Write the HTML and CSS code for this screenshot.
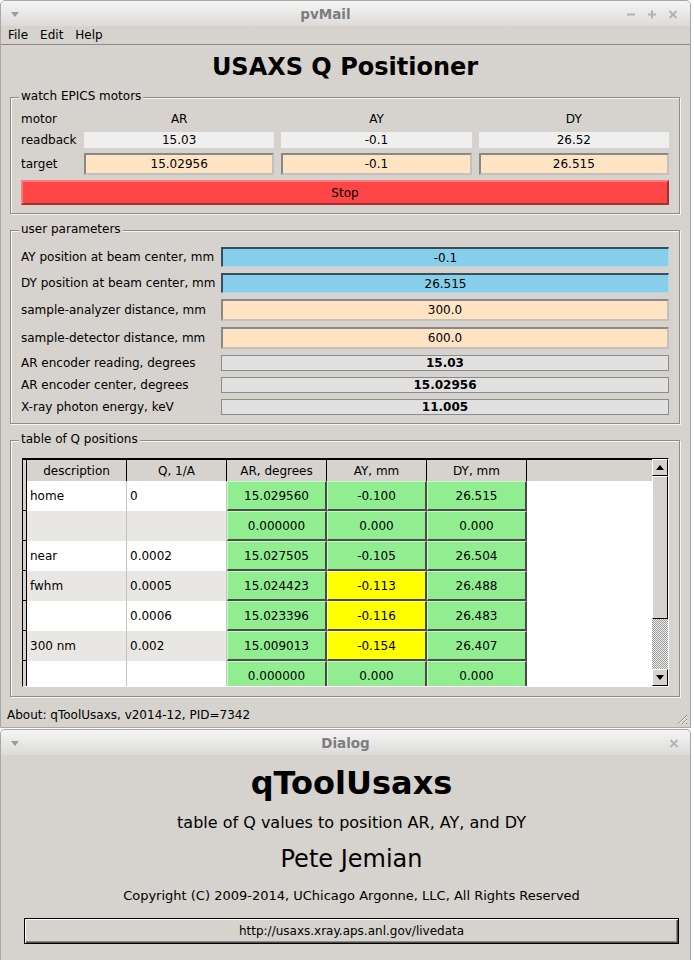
FILE: index.html
```html
<!DOCTYPE html>
<html>
<head>
<meta charset="utf-8">
<title>USAXS Q Positioner</title>
<link rel="stylesheet" href="styles.css">
</head>
<body>
<div class="screen">
  <section class="win main-win">
    <header class="titlebar">
      <span class="tb-left"><span class="tb-arrow"></span></span>
      <span class="tb-title">pvMail</span>
      <span class="tb-btns">
        <svg class="tb-icon" viewBox="0 0 10 10"><path d="M1 5.5H9"/></svg>
        <svg class="tb-icon" viewBox="0 0 10 10"><path d="M1 5.5H9M5 1.5V9.5"/></svg>
        <svg class="tb-icon" viewBox="0 0 10 10"><path d="M1.5 2L8.5 9M8.5 2L1.5 9"/></svg>
      </span>
    </header>
    <nav class="menubar"><span>File</span><span>Edit</span><span>Help</span></nav>
    <main class="content">
      <h1 class="app-title">USAXS Q Positioner</h1>

      <fieldset class="group motors">
        <legend>watch EPICS motors</legend>
        <div class="motor-grid">
          <span class="lbl">motor</span>
          <span class="colhead">AR</span>
          <span class="colhead">AY</span>
          <span class="colhead">DY</span>
          <span class="lbl">readback</span>
          <span class="field readback">15.03</span>
          <span class="field readback">-0.1</span>
          <span class="field readback">26.52</span>
          <span class="lbl">target</span>
          <span class="field target">15.02956</span>
          <span class="field target">-0.1</span>
          <span class="field target">26.515</span>
        </div>
        <button class="stop">Stop</button>
      </fieldset>

      <fieldset class="group params">
        <legend>user parameters</legend>
        <div class="param-grid">
          <span class="lbl">AY position at beam center, mm</span>
          <span class="field blue">-0.1</span>
          <span class="lbl">DY position at beam center, mm</span>
          <span class="field blue">26.515</span>
          <span class="lbl">sample-analyzer distance, mm</span>
          <span class="field target">300.0</span>
          <span class="lbl">sample-detector distance, mm</span>
          <span class="field target">600.0</span>
          <span class="lbl">AR encoder reading, degrees</span>
          <span class="field ro">15.03</span>
          <span class="lbl">AR encoder center, degrees</span>
          <span class="field ro">15.02956</span>
          <span class="lbl">X-ray photon energy, keV</span>
          <span class="field ro">11.005</span>
        </div>
      </fieldset>

      <fieldset class="group qgroup">
        <legend>table of Q positions</legend>
        <div class="qtable">
          <div class="qgrid">
            <div class="qrow head">
              <span class="rh"></span>
              <span class="hc">description</span>
              <span class="hc">Q, 1/A</span>
              <span class="hc">AR, degrees</span>
              <span class="hc">AY, mm</span>
              <span class="hc">DY, mm</span>
              <span class="hc fill"></span>
            </div>
            <div class="qrow">
              <span class="rh"></span>
              <span class="tc">home</span><span class="tc">0</span>
              <span class="gc">15.029560</span><span class="gc">-0.100</span><span class="gc">26.515</span>
              <span class="blank"></span>
            </div>
            <div class="qrow alt">
              <span class="rh"></span>
              <span class="tc"></span><span class="tc"></span>
              <span class="gc">0.000000</span><span class="gc">0.000</span><span class="gc">0.000</span>
              <span class="blank"></span>
            </div>
            <div class="qrow">
              <span class="rh"></span>
              <span class="tc">near</span><span class="tc">0.0002</span>
              <span class="gc">15.027505</span><span class="gc">-0.105</span><span class="gc">26.504</span>
              <span class="blank"></span>
            </div>
            <div class="qrow alt">
              <span class="rh"></span>
              <span class="tc">fwhm</span><span class="tc">0.0005</span>
              <span class="gc">15.024423</span><span class="gc yc">-0.113</span><span class="gc">26.488</span>
              <span class="blank"></span>
            </div>
            <div class="qrow">
              <span class="rh"></span>
              <span class="tc"></span><span class="tc">0.0006</span>
              <span class="gc">15.023396</span><span class="gc yc">-0.116</span><span class="gc">26.483</span>
              <span class="blank"></span>
            </div>
            <div class="qrow alt">
              <span class="rh"></span>
              <span class="tc">300 nm</span><span class="tc">0.002</span>
              <span class="gc">15.009013</span><span class="gc yc">-0.154</span><span class="gc">26.407</span>
              <span class="blank"></span>
            </div>
            <div class="qrow">
              <span class="rh"></span>
              <span class="tc"></span><span class="tc"></span>
              <span class="gc">0.000000</span><span class="gc">0.000</span><span class="gc">0.000</span>
              <span class="blank"></span>
            </div>
          </div>
          <div class="vscroll">
            <span class="sb-btn up"><span class="tri-up"></span></span>
            <span class="sb-thumb"></span>
            <span class="sb-track"></span>
            <span class="sb-btn down"><span class="tri-down"></span></span>
          </div>
        </div>
      </fieldset>
    </main>
    <footer class="statusbar">About: qToolUsaxs, v2014-12, PID=7342</footer>
    <svg class="grip" viewBox="0 0 12 12">
      <path class="grip-dark" d="M11 2L2 11M11 6L6 11M11 10L10 11"/>
      <path class="grip-light" d="M11 3L3 11M11 7L7 11"/>
    </svg>
  </section>

  <section class="win dialog">
    <header class="titlebar">
      <span class="tb-left"><span class="tb-arrow"></span></span>
      <span class="tb-title">Dialog</span>
      <span class="tb-btns single">
        <svg class="tb-icon" viewBox="0 0 10 10"><path d="M1.5 2L8.5 9M8.5 2L1.5 9"/></svg>
      </span>
    </header>
    <div class="dlg-body">
      <div class="dlg-name">qToolUsaxs</div>
      <div class="dlg-desc">table of Q values to position AR, AY, and DY</div>
      <div class="dlg-author">Pete Jemian</div>
      <div class="dlg-copy">Copyright (C) 2009-2014, UChicago Argonne, LLC, All Rights Reserved</div>
      <button class="dlg-url">http://usaxs.xray.aps.anl.gov/livedata</button>
    </div>
  </section>
</div>
</body>
</html>
```

FILE: styles.css
```css
* { box-sizing: border-box; }
html, body { margin: 0; padding: 0; }
body {
  width: 694px;
  height: 960px;
  overflow: hidden;
  background: #ffffff;
  font-family: "DejaVu Sans", "Liberation Sans", sans-serif;
  font-size: 12px;
  color: #000;
}

.screen {
  display: flex;
  flex-direction: column;
  width: 694px;
  height: 960px;
}

/* ---------- windows ---------- */
.win {
  width: 691px;
  background: #d6d2cd;
  border: 1px solid #a9a7a4;
  border-radius: 5px 5px 0 0;
  position: relative;
  display: flex;
  flex-direction: column;
  flex: none;
}
.main-win { height: 728px; }
.dialog { height: 231px; margin-top: 1px; border-bottom: none; }

.titlebar {
  height: 25px;
  flex: none;
  display: flex;
  align-items: center;
  background: linear-gradient(#f5f5f5, #dcdbd9);
  border-radius: 4px 4px 0 0;
}
.tb-left { width: 28px; display: flex; justify-content: center; padding-top: 1px; }
.tb-arrow {
  width: 0; height: 0;
  border-left: 4px solid transparent;
  border-right: 4px solid transparent;
  border-top: 5px solid #9c9c9c;
}
.tb-title {
  flex: 1;
  text-align: center;
  font-weight: bold;
  font-size: 13.5px;
  color: #7d7d7d;
}
.tb-btns {
  width: 68px;
  display: flex;
  align-items: center;
  gap: 11px;
  padding-left: 4px;
}
.tb-btns.single { width: 28px; padding-left: 7px; }
.tb-icon { width: 10px; height: 10px; fill: none; stroke: #b3b3b3; stroke-width: 2; }

.menubar {
  height: 19px;
  flex: none;
  display: flex;
  padding-left: 1px;
  line-height: 18px;
  border-bottom: 1px solid #8c8a86;
}
.menubar span { padding: 0 6px; }

/* ---------- main content ---------- */
.content {
  flex: 1;
  padding: 0 10px 0 9px;
  display: flex;
  flex-direction: column;
}
.app-title {
  margin: 8px 0 0;
  font-size: 24px;
  line-height: 28px;
  font-weight: bold;
  text-align: center;
}

.group {
  margin: 6px 0 0;
  padding: 0 10px 8px;
  border: 1px solid #8f8c88;
  box-shadow: inset 1px 1px 0 #f6f5f3, 1px 1px 0 #f6f5f3;
  min-width: 0;
}
.group legend {
  padding: 2px 2px 4px;
  margin-left: -2px;
  line-height: 14px;
  background: #d6d2cd;
}
.motors { padding-top: 4px; }
.params { padding-top: 7px; }
.qgroup { padding-top: 8px; padding-bottom: 9px; }

.lbl { white-space: nowrap; }

.motor-grid {
  display: grid;
  grid-template-columns: 56px repeat(3, 1fr);
  grid-template-rows: 16px 16px 22px;
  gap: 5px 7px;
  align-items: center;
}
.colhead { text-align: center; }

.field {
  display: flex;
  align-items: center;
  justify-content: center;
  height: 100%;
  white-space: nowrap;
}
.readback { background: #efefef; }
.target {
  background: #ffe4c4;
  border-style: solid;
  border-width: 2px;
  border-color: #8a8886 #c4c0bc #c4c0bc #8a8886;
}
.blue {
  background: #87ceeb;
  border-style: solid;
  border-width: 2px 1px 1px 2px;
  border-color: #35505c #a9d9eb #a9d9eb #35505c;
}
.ro {
  background: #e0e0e0;
  border: 1px solid #8c8c8c;
  font-weight: bold;
}

.stop {
  display: block;
  width: 100%;
  height: 25px;
  margin-top: 5px;
  padding: 0;
  background: #ff4646;
  border: 2px solid;
  border-color: #ff7a7a #a33030 #a33030 #ff7a7a;
  font: inherit;
  color: #000;
}

.param-grid {
  display: grid;
  grid-template-columns: 200px 1fr;
  grid-template-rows: 20px 20px 22px 22px 16px 16px 16px;
  row-gap: 6px;
  align-items: center;
}

/* ---------- Q table ---------- */
.qtable {
  display: flex;
  height: 229px;
  margin: 0 0 0 1px;
  border-style: solid;
  border-width: 1px;
  border-color: #000 #fff #fff #000;
}
.qgrid {
  flex: 1;
  overflow: hidden;
  display: flex;
  flex-direction: column;
  background: #fff;
}
.qrow {
  display: grid;
  grid-template-columns: 4px repeat(5, 100px) 1fr;
  height: 30px;
  flex: none;
}
.qrow.head { height: 22px; }
.hc {
  background: #d6d2cd;
  border-top: 1px solid #000;
  border-right: 1px solid #000;
  display: flex;
  align-items: center;
  justify-content: center;
}
.hc.fill { border-right: none; }
.rh {
  background: #d6d2cd;
  border-right: 1px solid #000;
  border-bottom: 1px solid #000;
}
.head .rh { border-top: 1px solid #000; border-bottom: none; }
.tc {
  display: flex;
  align-items: center;
  padding-left: 3px;
  border-right: 1px solid #c4c4c4;
  background: #fff;
}
.alt .tc { background: #e9e7e3; }
.gc {
  display: flex;
  align-items: center;
  justify-content: center;
  background: #90ee90;
  border-style: solid;
  border-width: 1px 2px 2px 1px;
  border-color: #c8f7c8 #4a4a4a #4a4a4a #c8f7c8;
}
.gc.yc {
  background: #ffff00;
  border-color: #ffffa8 #4a4a4a #4a4a4a #ffffa8;
}
.blank { background: #fff; }

.vscroll {
  width: 16px;
  flex: none;
  display: flex;
  flex-direction: column;
  background: #d6d2cd;
}
.sb-btn {
  height: 17px;
  flex: none;
  display: flex;
  align-items: center;
  justify-content: center;
  background: #d6d2cd;
  border: 1px solid;
  border-color: #fff #000 #000 #fff;
}
.sb-thumb {
  height: 143px;
  flex: none;
  background: #d6d2cd;
  border: 1px solid;
  border-color: #fff #000 #000 #fff;
}
.sb-track {
  flex: 1;
  background: repeating-conic-gradient(#9c9c9c 0 25%, #ededed 0 50%) 0 0 / 2px 2px;
}
.tri-up {
  width: 0; height: 0;
  border-left: 4px solid transparent;
  border-right: 4px solid transparent;
  border-bottom: 5px solid #000;
}
.tri-down {
  width: 0; height: 0;
  border-left: 4px solid transparent;
  border-right: 4px solid transparent;
  border-top: 5px solid #000;
}

.statusbar {
  height: 24px;
  flex: none;
  line-height: 24px;
  padding-left: 6px;
}
.grip {
  position: absolute;
  right: 2px;
  bottom: 2px;
  width: 12px;
  height: 12px;
  fill: none;
}
.grip-dark { stroke: #8a8884; stroke-width: 1; }
.grip-light { stroke: #fff; stroke-width: 1; }

/* ---------- dialog ---------- */
.dlg-body {
  flex: 1;
  display: flex;
  flex-direction: column;
  align-items: center;
  padding: 0 11px 0 23px;
}
.dlg-name {
  margin-top: 10px;
  font-size: 32px;
  line-height: 36px;
  font-weight: bold;
}
.dlg-desc {
  margin-top: 12px;
  font-size: 16px;
  line-height: 20px;
}
.dlg-author {
  margin-top: 12px;
  font-size: 24px;
  line-height: 28px;
}
.dlg-copy {
  margin-top: 15px;
  font-size: 13px;
  line-height: 16px;
}
.dlg-url {
  margin-top: 14px;
  align-self: stretch;
  height: 26px;
  padding: 0;
  background: #d6d2cd;
  border: 1px solid #000;
  box-shadow: inset 1px 1px 0 #fff, inset -1px -1px 0 #4a4a4a, inset -2px -2px 0 #8f8c88;
  font-family: inherit;
  font-size: 12px;
  color: #000;
}
```
